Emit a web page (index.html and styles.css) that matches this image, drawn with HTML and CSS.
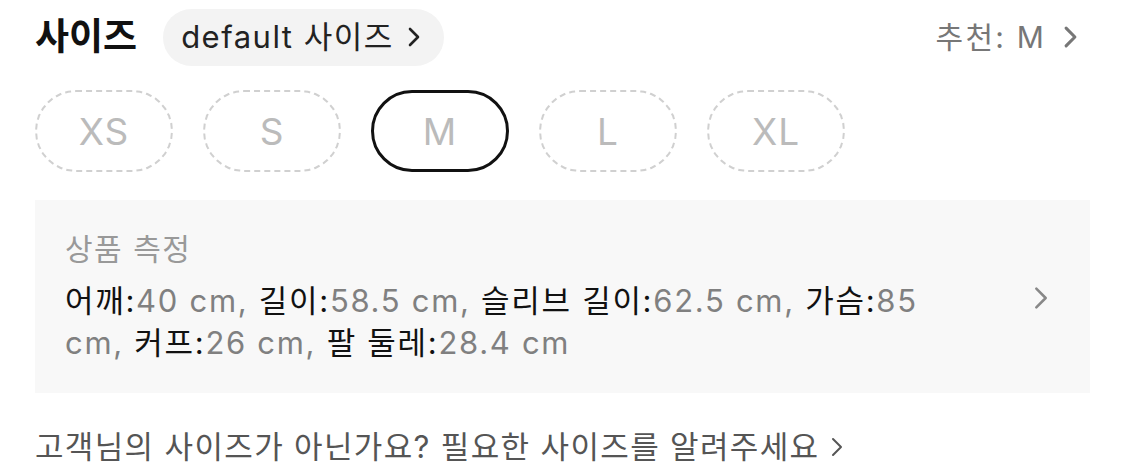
FILE: index.html
```html
<!DOCTYPE html>
<html lang="ko">
<head>
  <meta charset="UTF-8">
  <title>사이즈</title>
  <link rel="stylesheet" href="styles.css">
</head>
<body>

  <div class="size-head">
    <div class="head-left">
      <span class="title">사이즈</span>
      <span class="chip">default 사이즈
        <svg class="chev chip-chev" viewBox="0 0 12 20"><polyline points="2,2 10,10 2,18"/></svg>
      </span>
    </div>
    <div class="recommend">추천: M
      <svg class="chev rec-chev" viewBox="0 0 12 20"><polyline points="2,2 10,10 2,18"/></svg>
    </div>
  </div>

  <div class="size-list">
    <div class="pill">XS</div>
    <div class="pill">S</div>
    <div class="pill selected">M</div>
    <div class="pill">L</div>
    <div class="pill">XL</div>
  </div>

  <div class="measure">
    <div class="measure-text">
      <div class="measure-title">상품 측정</div>
      <div class="measure-values">
        <b>어깨:</b>40 cm, <b>길이:</b>58.5 cm, <b>슬리브 길이:</b>62.5 cm, <b>가슴:</b>85 cm, <b>커프:</b>26 cm, <b>팔 둘레:</b>28.4 cm
      </div>
    </div>
    <svg class="chev box-chev" viewBox="0 0 12 20"><polyline points="2,2 10,10 2,18"/></svg>
  </div>

  <div class="request">고객님의 사이즈가 아닌가요? 필요한 사이즈를 알려주세요
    <svg class="chev req-chev" viewBox="0 0 12 20"><polyline points="2,2 10,10 2,18"/></svg>
  </div>

</body>
</html>
```

FILE: styles.css
```css
body {
  margin: 0;
  padding: 0 35px;
  font-family: "Inter", "Noto Sans CJK KR", sans-serif;
  background: #fff;
  color: #222;
  word-break: keep-all;
}

.chev {
  fill: none;
  stroke-linecap: round;
  stroke-linejoin: round;
}

.size-head {
  display: flex;
  align-items: center;
  justify-content: space-between;
  height: 74px;
  padding-right: 12px;
}

.head-left {
  display: flex;
  align-items: center;
  gap: 26px;
}

.title {
  font-size: 37px;
  font-weight: bold;
  line-height: 40px;
  color: #111;
}

.chip {
  display: flex;
  align-items: center;
  gap: 14px;
  height: 57px;
  padding: 0 24px 0 18px;
  border-radius: 29px;
  background: #f3f3f3;
  font-size: 31px;
  letter-spacing: 1.5px;
  line-height: 34px;
  color: #222;
}

.chip-chev {
  width: 12px;
  height: 20px;
  stroke: #222;
  stroke-width: 2.6;
}

.recommend {
  display: flex;
  align-items: center;
  gap: 17px;
  font-size: 30px;
  letter-spacing: 2.2px;
  line-height: 34px;
  color: #777;
}

.rec-chev {
  width: 15px;
  height: 22px;
  stroke: #777;
  stroke-width: 2.8;
}

.size-list {
  display: flex;
  gap: 30px;
  margin-top: 16px;
}

.pill {
  box-sizing: border-box;
  width: 138px;
  height: 82px;
  border: 2px dashed #d0d0d0;
  border-radius: 41px;
  display: flex;
  align-items: center;
  justify-content: center;
  font-size: 37px;
  letter-spacing: 1px;
  color: #bbb;
}

.pill.selected {
  border: 3px solid #111;
}

.measure {
  display: flex;
  align-items: center;
  margin-top: 28px;
  height: 193px;
  box-sizing: border-box;
  padding: 0 42px 0 30px;
  background: #f8f8f8;
}

.measure-text {
  width: 900px;
}

.measure-title {
  font-size: 30px;
  letter-spacing: 1.5px;
  line-height: 40px;
  color: #999;
  margin-bottom: 11px;
}

.measure-values {
  font-size: 31px;
  letter-spacing: 1.7px;
  line-height: 42px;
  color: #808080;
}

.measure-values b {
  font-weight: normal;
  color: #111;
}

.box-chev {
  margin-left: auto;
  width: 14px;
  height: 24px;
  stroke: #888;
  stroke-width: 2.2;
  align-self: flex-start;
  margin-top: 86px;
}

.request {
  display: flex;
  align-items: center;
  gap: 12px;
  margin-top: 34px;
  font-size: 31px;
  letter-spacing: 1.35px;
  line-height: 40px;
  color: #555;
}

.req-chev {
  width: 12px;
  height: 22px;
  stroke: #555;
  stroke-width: 2;
}
```
